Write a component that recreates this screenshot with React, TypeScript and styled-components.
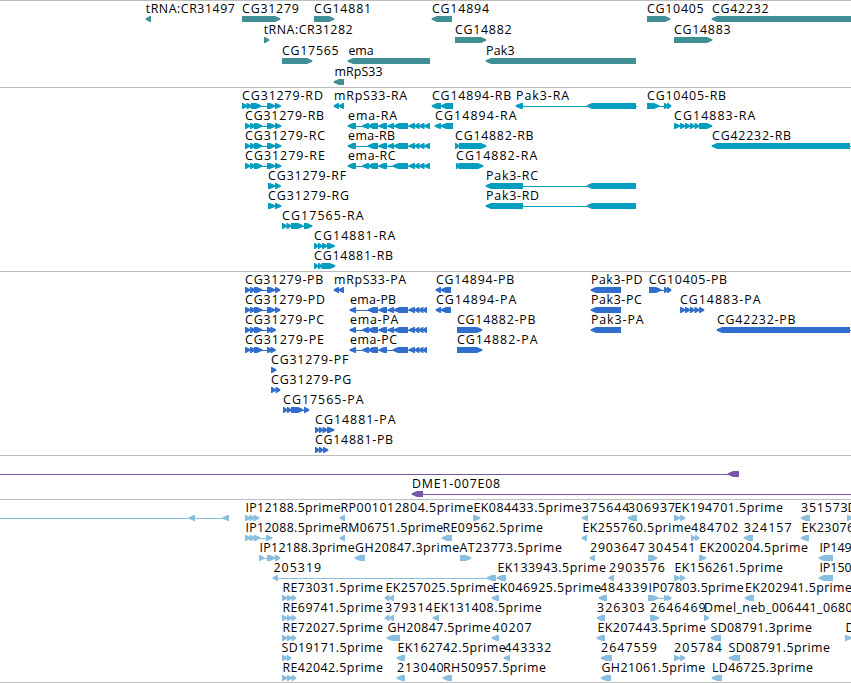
import React from 'react';
import styled, { createGlobalStyle } from 'styled-components';

type Strand = '+' | '-';

type Feature = {
  label?: string;
  // left and right edge of the label
  text: [number, number];
  strand: Strand;
  blocks: number[][];
  // extent of the connecting line, when it runs past the blocks
  line?: [number, number];
};

const feature = (
  label: string,
  text: [number, number],
  strand: Strand,
  blocks: number[][],
  line?: [number, number]
): Feature => ({ label, text, strand, blocks, line });

const GlobalStyle = createGlobalStyle`
  body {
    margin: 0;
    background: #ffffff;
    overflow: hidden;
  }
`;

const Browser = styled.main`
  width: 851px;
  height: 683px;
  overflow: hidden;
  background: #ffffff;
`;

const TrackWrapper = styled.section<{ $color: string; $bottom: number }>`
  display: flex;
  flex-direction: column;
  padding: 2px 0 ${({ $bottom }) => $bottom}px;
  border-top: 1px solid #bdbdbd;
  color: ${({ $color }) => $color};
`;

const Row = styled.svg<{ $height: number }>`
  display: block;
  flex: none;
  width: 851px;
  height: ${({ $height }) => $height}px;
  overflow: visible;
`;

const Label = styled.text`
  font-family: 'Open Sans', 'Noto Sans', sans-serif;
  font-size: 12.4px;
  fill: #000000;
  white-space: pre;
`;

const Block = styled.polygon`
  fill: currentColor;
`;

const Connector = styled.rect`
  fill: currentColor;
`;

const End = styled.div`
  height: 1px;
  background: #bdbdbd;
`;

const TOP = 13;
const BOTTOM = 19;

const arrowPoints = (start: number, end: number, strand: Strand) => {
  const width = end - start;
  const head = Math.min(5, width - 1);
  const tip = strand === '+' ? end + 0.3 : start - 0.3;
  const neck = strand === '+' ? end - head : start + head;
  const tail = strand === '+' ? start : end;
  return [
    [tail, TOP],
    [neck, TOP],
    [tip, TOP + 2.2],
    [tip, BOTTOM - 2.2],
    [neck, BOTTOM],
    [tail, BOTTOM],
  ].map(p => p.join(',')).join(' ');
};

const FeatureGlyph = ({ label, text, strand, blocks, line }: Feature) => {
  const [from, to] = line || [blocks[0][0], blocks[blocks.length - 1][1]];
  return (
    <g>
      {(line || blocks.length > 1) && (
        <Connector x={from} y={16} width={to - from} height={1} />
      )}
      {blocks.map(([start, end]) => (
        <Block key={start} points={arrowPoints(start, end, strand)} />
      ))}
      {label && (
        <Label x={text[0] - 0.6} y={10} textLength={text[1] - text[0] + 1.2} lengthAdjust="spacing">
          {label}
        </Label>
      )}
    </g>
  );
};

type TrackProps = {
  color: string;
  rows: Feature[][];
  rowHeight?: number;
  bottom?: number;
};

const Track = ({ color, rows, rowHeight = 20, bottom = 0 }: TrackProps) => (
  <TrackWrapper $color={color} $bottom={bottom}>
    {rows.map((features, i) => (
      <Row key={i} $height={rowHeight}>
        {features.map((f, j) => <FeatureGlyph key={j} {...f} />)}
      </Row>
    ))}
  </TrackWrapper>
);

const genes: Feature[][] = [
  [
    feature('tRNA:CR31497', [146.3, 234.3], '-', [[146, 151]]),
    feature('CG31279', [242.7, 298.3], '+', [[242, 280]]),
    feature('CG14881', [314.7, 370.5], '+', [[314, 334]]),
    feature('CG14894', [432.5, 488.5], '-', [[432, 452]]),
    feature('CG10405', [647.7, 703], '+', [[647, 670]]),
    feature('CG42232', [712.7, 768], '-', [[712, 860]]),
  ],
  [
    feature('tRNA:CR31282', [264.3, 352], '+', [[264, 269]]),
    feature('CG14882', [455.5, 511], '+', [[455, 486]]),
    feature('CG14883', [674.5, 730], '+', [[674, 712]]),
  ],
  [
    feature('CG17565', [282.7, 338], '+', [[282, 312]]),
    feature('ema', [349, 373], '-', [[348, 430]]),
    feature('Pak3', [486.7, 514], '-', [[486, 636]]),
  ],
  [feature('mRpS33', [335, 382], '-', [[334, 344]])],
];

const firstExons = [[245, 250], [250, 255], [254, 262]];
const emaTail = [[409, 415], [415, 419.5], [419.5, 424.5], [424.5, 430]];

const transcripts: Feature[][] = [
  [
    feature('CG31279-RD', [242.7, 322.3], '+', [[242, 247], [246.5, 252], [251, 261], [267, 275], [275, 280.5]]),
    feature('mRpS33-RA', [334.7, 406.5], '-', [[334, 339], [339, 344]]),
    feature('CG14894-RB', [432.5, 510.7], '-', [[432, 441], [441, 453]]),
    feature('Pak3-RA', [516.7, 568.5], '-', [[516, 523], [587, 636]], [516, 637]),
    feature('CG10405-RB', [647.7, 725.5], '+', [[647, 659], [664, 667.5], [667, 671]]),
  ],
  [
    feature('CG31279-RB', [245.7, 323.5], '+', [...firstExons, [267, 275], [275, 281]]),
    feature('ema-RA', [348.7, 396.5], '-', [[348, 356], [362.5, 369], [368, 378], [379, 387], [388, 394], [394, 408], ...emaTail]),
    feature('CG14894-RA', [435.7, 516], '-', [[435, 441], [441, 453]]),
    feature('CG14883-RA', [674.7, 754.7], '+', [[674, 680], [680, 685], [685, 690], [690, 694.5], [694.5, 699], [699, 712]]),
  ],
  [
    feature('CG31279-RC', [245.7, 324.5], '+', [...firstExons, [267, 275], [275, 281]]),
    feature('ema-RB', [348.7, 394.5], '-', [[348, 356], [368, 378], [379, 387], [388, 394], [394, 408], ...emaTail]),
    feature('CG14882-RB', [455.7, 533], '+', [[455, 459], [459, 486]]),
    feature('CG42232-RB', [712.7, 790.5], '-', [[712, 850]], [712, 851]),
  ],
  [
    feature('CG31279-RE', [245.7, 324.3], '+', [...firstExons, [267, 275], [275, 281]]),
    feature('ema-RC', [348.7, 395], '-', [[348, 356], [362.5, 369], [368, 378], [379, 387], [393, 408], ...emaTail]),
    feature('CG14882-RA', [456.7, 536.7], '+', [[456, 459], [458.5, 483]]),
  ],
  [
    feature('CG31279-RF', [268.7, 345.5], '+', [[268, 275], [275, 280.5]]),
    feature('Pak3-RC', [486.7, 537.5], '-', [[486, 523], [587, 636]]),
  ],
  [
    feature('CG31279-RG', [268.7, 348.5], '+', [[268, 275], [275, 281]]),
    feature('Pak3-RD', [486.7, 538.5], '-', [[486, 523], [587, 636]]),
  ],
  [feature('CG17565-RA', [282.7, 363], '+', [[282, 286.5], [286.5, 291], [291, 303], [304, 312]])],
  [feature('CG14881-RA', [314.7, 394.7], '+', [[314, 318], [318, 322], [322, 327], [327, 334.5]])],
  [feature('CG14881-RB', [314.7, 392.5], '+', [[314, 318], [318, 322], [321.5, 335]])],
];

const codingEma = [[409, 415], [415, 419.5], [419.5, 423.5], [423.5, 427]];

const proteins: Feature[][] = [
  [
    feature('CG31279-PB', [245.7, 322.7], '+', [...firstExons, [267, 275], [275, 280]]),
    feature('mRpS33-PA', [334.7, 405.5], '-', [[334, 339], [339, 344]]),
    feature('CG14894-PB', [436.5, 513.7], '-', [[436, 441], [441, 451]]),
    feature('Pak3-PD', [591.5, 642], '-', [[591, 621]]),
    feature('CG10405-PB', [649.3, 726.5], '+', [[649, 661], [664, 667.5], [667, 671]]),
  ],
  [
    feature('CG31279-PD', [245.7, 324.5], '+', [...firstExons, [267, 275], [275, 280]]),
    feature('ema-PB', [350.7, 395.5], '-', [[350, 356], [368, 378], [379, 387], [388, 394], [394, 408], ...codingEma]),
    feature('CG14894-PA', [436.5, 515.7], '-', [[436, 441], [441, 451]]),
    feature('Pak3-PC', [591.5, 641.3], '-', [[591, 621]]),
    feature('CG14883-PA', [680.5, 760], '+', [[680, 685], [685, 690], [690, 694.5], [694.5, 699], [699, 704]]),
  ],
  [
    feature('CG31279-PC', [245.7, 323.5], '+', [...firstExons, [267, 272], [270.5, 275.5]]),
    feature('ema-PA', [350.7, 397.7], '-', [[350, 356], [362.5, 369], [368, 378], [379, 387], [388, 394], [394, 408], ...codingEma]),
    feature('CG14882-PB', [457.5, 535], '+', [[457, 482]]),
    feature('Pak3-PA', [591.5, 643], '-', [[591, 621]]),
    feature('CG42232-PB', [717.5, 795], '-', [[717, 850]], [717, 851]),
  ],
  [
    feature('CG31279-PE', [245.7, 323.3], '+', [...firstExons, [267, 272], [270.5, 275.5]]),
    feature('ema-PC', [350.7, 396.5], '-', [[350, 356], [362.5, 369], [368, 378], [379, 387], [393, 408], ...codingEma]),
    feature('CG14882-PA', [457.5, 537], '+', [[457, 482]]),
  ],
  [feature('CG31279-PF', [271.7, 347.7], '+', [[271, 276]])],
  [feature('CG31279-PG', [271.7, 350.7], '+', [[271, 275.5], [275.5, 280]])],
  [feature('CG17565-PA', [283.7, 363], '+', [[283, 287], [287, 291], [291, 303], [304, 309]])],
  [feature('CG14881-PA', [315.7, 395], '+', [[315, 319], [319, 322.5], [322.5, 327], [327, 334]])],
  [feature('CG14881-PB', [315.7, 392.5], '+', [[315, 319], [319, 323], [323, 328]])],
];

const transposons: Feature[][] = [
  [feature('', [0, 0], '-', [[728, 739]], [0, 739])],
  [feature('DME1-007E08', [412.7, 499.5], '-', [[412, 423]], [412, 851])],
];

const threeReads = [[282, 287], [287, 291.5], [291.5, 296]];

const ests: Feature[][] = [
  [
    feature('', [0, 0], '-', [[189, 195], [223, 229]], [0, 229]),
    feature('IP12188.5prime', [246, 340], '+', [[245, 250], [249.5, 254], [253.5, 259]]),
    feature('RP001012804.5prime', [341, 472.5], '-', [[340, 345]]),
    feature('EK084433.5prime', [474, 581], '+', [[473, 480]]),
    feature('375644', [582.7, 628.7], '-', [[582, 588]]),
    feature('306937', [628.7, 674.5], '-', [[628, 637]]),
    feature('EK194701.5prime', [675, 782.3], '+', [[674, 680], [680, 685]]),
    feature('351573', [801.7, 847], '-', [[801, 810]]),
    feature('D', [848, 855], '+', [[847, 852]]),
  ],
  [
    feature('IP12088.5prime', [246, 340], '+', [[245, 250], [249.5, 254], [253.5, 260], [266, 272]]),
    feature('RM06751.5prime', [341, 442.5], '-', [[340, 345]]),
    feature('RE09562.5prime', [443, 542.3], '-', [[442, 452]]),
    feature('EK255760.5prime', [583, 690.3], '-', [[582, 587]]),
    feature('484702', [691.7, 737.5], '+', [[691, 695], [695, 699]]),
    feature('324157', [744.3, 791], '-', [[744, 753]]),
    feature('EK23076', [802, 853.5], '-', [[801, 809]]),
  ],
  [
    feature('IP12188.3prime', [260, 354], '+', [[259, 264], [267, 275], [275, 280]]),
    feature('GH20847.3prime', [355.7, 458.5], '-', [[355, 365]]),
    feature('AT23773.5prime', [460, 561.3], '+', [[460, 471]]),
    feature('2903647', [590.5, 644.3], '-', [[590, 595]]),
    feature('304541', [648.7, 694.7], '+', [[648, 657]]),
    feature('EK200204.5prime', [700, 807.3], '+', [[699, 706]]),
    feature('IP149', [820, 851], '-', [[819, 833]]),
  ],
  [
    feature('205319', [274, 320.5], '-', [[273, 278], [487, 496]]),
    feature('EK133943.5prime', [498, 605.3], '-', [[497, 506]]),
    feature('2903576', [609.7, 664.3], '-', [[609, 614]]),
    feature('EK156261.5prime', [675, 782.3], '+', [[674, 680], [680, 685]]),
    feature('IP150', [820, 851], '-', [[819, 833]]),
  ],
  [
    feature('RE73031.5prime', [283, 382.3], '+', threeReads),
    feature('EK257025.5prime', [386, 493], '-', [[385, 389.5], [389.5, 394]]),
    feature('EK046925.5prime', [493, 600.3], '-', [[492, 499]]),
    feature('484339', [600.7, 646.7], '-', [[599, 607]]),
    feature('IP07803.5prime', [649, 743], '+', [[648, 658], [664, 667.5], [667, 671]]),
    feature('EK202941.5prime', [745.7, 851.3], '-', [[745, 754]]),
  ],
  [
    feature('RE69741.5prime', [283, 382.3], '+', threeReads),
    feature('379314', [385.7, 432], '-', [[385, 389.5], [389.5, 394]]),
    feature('EK131408.5prime', [434, 541], '-', [[433, 439]]),
    feature('326303', [597.7, 644], '-', [[597, 605]]),
    feature('2646469', [650.7, 705], '+', [[650, 659]]),
    feature('Dmel_neb_006441_0680', [704.7, 852], '+', [[704, 709]]),
  ],
  [
    feature('RE72027.5prime', [283, 382.3], '+', threeReads),
    feature('GH20847.5prime', [388, 490], '-', [[387, 400]]),
    feature('40207', [493, 531], '-', [[492, 499]]),
    feature('EK207443.5prime', [598, 705.3], '-', [[597, 605]]),
    feature('SD08791.3prime', [711, 811.3], '-', [[711, 721]]),
    feature('D', [846, 853], '+', [[845, 851]]),
  ],
  [
    feature('SD19171.5prime', [282, 382.3], '+', [[282, 287], [286.5, 291]]),
    feature('EK162742.5prime', [398, 505], '-', [[397, 405]]),
    feature('443332', [505, 550.7], '-', [[504, 510]]),
    feature('2647559', [601.7, 656.3], '-', [[601, 612]]),
    feature('205784', [674.7, 721.3], '+', [[674, 680], [680, 685]]),
    feature('SD08791.5prime', [729, 829.3], '-', [[729, 740]]),
  ],
  [
    feature('RE42042.5prime', [283, 382.3], '+', threeReads),
    feature('213040', [397.7, 443], '-', [[397, 405]]),
    feature('RH50957.5prime', [443.5, 545.3], '-', [[443, 452]]),
    feature('GH21061.5prime', [602, 704.5], '-', [[601, 611]]),
    feature('LD46725.3prime', [712.5, 812.3], '-', [[712, 722]]),
  ],
];

const App = () => (
  <>
    <GlobalStyle />
    <Browser>
      <Track color="#408f94" rows={genes} rowHeight={21} />
      <Track color="#049dbf" rows={transcripts} bottom={1} />
      <Track color="#316dcd" rows={proteins} bottom={1} />
      <Track color="#7a57a8" rows={transposons} bottom={1} />
      <Track color="#88bedf" rows={ests} />
      <End />
    </Browser>
  </>
);

export default App;
